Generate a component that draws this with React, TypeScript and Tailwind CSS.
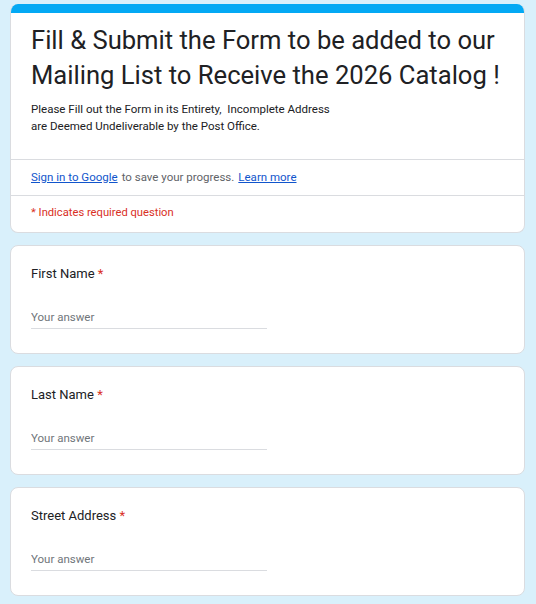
const questions = ["First Name", "Last Name", "Street Address"];

function QuestionCard({ label }: { label: string }) {
  return (
    <div className="bg-white border border-[#dadce0] rounded-lg h-[109px] px-[20px] pt-[18px]">
      <div className="text-[13px] leading-[20px] text-[#202124]">
        {label}
        <span className="text-[#d93025]"> *</span>
      </div>
      <div className="mt-[25px] w-[236px] border-b border-[#dadce0] pb-[3px]">
        <input
          className="block w-full h-[16px] p-0 text-[11.5px] leading-[16px] text-[#202124] placeholder:text-[#70757a] outline-none bg-transparent"
          placeholder="Your answer"
        />
      </div>
    </div>
  );
}

export default function App() {
  return (
    <div
      className="min-h-screen bg-[#d9f0fb] pt-[4px] pl-[10px] pr-[11px] pb-[8px] flex flex-col gap-[12px]"
      style={{ fontFamily: "Roboto, 'Noto Sans', sans-serif" }}
    >
      {/* header card */}
      <div className="bg-white rounded-lg border border-[#dadce0] border-t-0 overflow-hidden">
        <div className="h-[9px] bg-[#03a9f4]" />
        <div className="px-[20px] pt-[10px] pb-[24px] border-b border-[#dadce0]">
          <h1 className="text-[25.6px] leading-[35px] text-[#202124]">
            Fill &amp; Submit the Form to be added to our Mailing List to Receive the 2026 Catalog !
          </h1>
          <p className="mt-[8px] text-[11.5px] leading-[17px] text-[#202124]">
            Please Fill out the Form in its Entirety,&nbsp; Incomplete Address
            <br />
            are Deemed Undeliverable by the Post Office.
          </p>
        </div>
        <div className="h-[36px] px-[20px] flex items-center border-b border-[#dadce0] text-[11.5px] text-[#5f6368]">
          <a href="#" className="text-[#1155cc] underline">
            Sign in to Google
          </a>
          <span className="ml-[4px]">to save your progress.</span>
          <a href="#" className="ml-[4px] text-[#1155cc] underline">
            Learn more
          </a>
        </div>
        <div className="h-[36px] px-[20px] pt-[9px] text-[11.2px] leading-[16px] text-[#d93025]">
          * Indicates required question
        </div>
      </div>

      {questions.map((q) => (
        <QuestionCard key={q} label={q} />
      ))}
    </div>
  );
}
